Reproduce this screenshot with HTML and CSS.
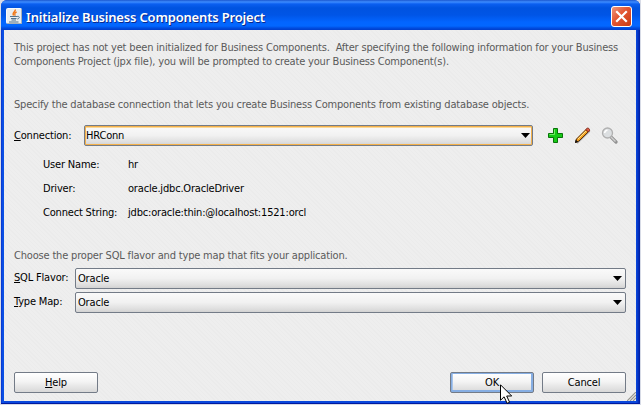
FILE: index.html
```html
<!DOCTYPE html>
<html lang="en">
<head>
<meta charset="utf-8">
<title>Initialize Business Components Project</title>
<link rel="stylesheet" href="styles.css">
</head>
<body>
<div class="window">
  <header class="titlebar">
    <svg class="java" width="16" height="16" viewBox="0 0 16 16">
      <rect x=".5" y=".5" width="15" height="15" rx="1" fill="#e9edef" stroke="#f8fafb"/>
      <path d="M15.500 1v14.500H1" fill="none" stroke="#a9b1b7"/>
      <path d="M9.200 1.500c1 2-3.800 3-1.600 6M10.600 4C8 5.200 8.600 6 9.200 7.800" fill="none" stroke="#f07818" stroke-width="1.400"/>
      <path d="M4 8.500h7M5 10.500h5.500M5.500 12h4.500M3 14h9.500M11 8.500c3-.8 3 2 .3 2.600" fill="none" stroke="#53738c"/>
    </svg>
    <h1 class="title">Initialize Business Components Project</h1>
    <svg class="close" width="21" height="21" viewBox="0 0 21 21">
      <defs><linearGradient id="red" x2="1" y2="1"><stop stop-color="#f09a80"/><stop offset=".45" stop-color="#e25532"/><stop offset="1" stop-color="#c93a10"/></linearGradient></defs>
      <rect x=".5" y=".5" width="20" height="20" rx="2.500" fill="url(#red)" stroke="#fff"/>
      <path d="M6 6l9 9M15 6l-9 9" stroke="#fff" stroke-width="2.200" stroke-linecap="square"/>
    </svg>
  </header>
  <main class="content">
    <p class="note intro">This project has not yet been initialized for Business Components.&nbsp; After specifying the following information for your Business<br>Components Project (jpx file), you will be prompted to create your Business Component(s).</p>
    <p class="note specify">Specify the database connection that lets you create Business Components from existing database objects.</p>
    <div class="connection">
      <label class="connection-label"><u>C</u>onnection:</label>
      <div class="combo focused"><span>HRConn</span><svg class="arrow" width="9" height="5"><path d="M0 0h9L4.500 5z"/></svg></div>
      <div class="tools">
        <svg width="17" height="17" viewBox="0 0 17 17">
          <path d="M7 2h4v5h5v4h-5v5H7v-5H2V7h5z" fill="#999" opacity=".6"/>
          <path d="M6.500 1.500h4v5h5v4h-5v5h-4v-5h-5v-4h5z" fill="#16c916" stroke="#087308"/>
          <path d="M7.500 2.500v5h-5" fill="none" stroke="#70ee65"/>
        </svg>
        <svg width="17" height="17" viewBox="0 0 17 17">
          <path d="M3 16L15.500 4" stroke="#aaa" stroke-width="2"/>
          <path d="M1.500 15.500l1-3.500 9.500-9.500 2.300 2.300-9.300 9.200z" fill="#f5a524" stroke="#5a2d06"/>
          <path d="M4 12l8-8" stroke="#ffe28a"/>
          <path d="M11.800 2.500l1.400-1.300h1.300l1 1.300v1.300l-1.200 1.200z" fill="#df5d45" stroke="#842919"/>
          <path d="M1 16l.7-3.500 2.500 2.500z" fill="#111"/>
        </svg>
        <svg width="17" height="17" viewBox="0 0 17 17">
          <path d="M10.500 10.500l4.500 4.500" stroke="#929292" stroke-width="3.200" stroke-linecap="round"/>
          <path d="M10 10l4.500 4.500" stroke="#d0d0d0" stroke-width="1.400"/>
          <circle cx="6.500" cy="6" r="5" fill="#dcdfe1" stroke="#b0b0b0" stroke-width="1.300"/>
          <path d="M3.700 6a2.800 2.800 0 0 1 2.800-2.800" fill="none" stroke="#fff" stroke-width="1.600"/>
        </svg>
      </div>
    </div>
    <dl class="details">
      <dt>User Name:</dt><dd>hr</dd>
      <dt>Driver:</dt><dd>oracle.jdbc.OracleDriver</dd>
      <dt>Connect String:</dt><dd>jdbc:oracle:thin:@localhost:1521:orcl</dd>
    </dl>
    <p class="note choose">Choose the proper SQL flavor and type map that fits your application.</p>
    <div class="choices">
      <label><u>S</u>QL Flavor:</label>
      <div class="combo"><span>Oracle</span><svg class="arrow" width="9" height="5"><path d="M0 0h9L4.500 5z"/></svg></div>
      <label><u>T</u>ype Map:</label>
      <div class="combo"><span>Oracle</span><svg class="arrow" width="9" height="5"><path d="M0 0h9L4.500 5z"/></svg></div>
    </div>
    <footer class="buttons">
      <button class="button help"><span><u>H</u>elp</span></button>
      <button class="button ok">OK</button>
      <button class="button">Cancel</button>
    </footer>
  </main>
  <svg class="grip" width="9" height="9" viewBox="0 0 9 9"><path d="M0 9l9-9M3 9l6-6M6 9l3-3" stroke="#96968f" stroke-width="1.200"/></svg>
  <svg class="cursor" width="13" height="20" viewBox="0 0 13 20"><path d="M.5.800v15.500l3.600-3.500 3 6.500 2.500-1-2.900-6.300h5z" fill="#fff" stroke="#000"/></svg>
</div>
</body>
</html>
```

FILE: styles.css
```css
* { box-sizing: border-box; }
body {
  margin: 0;
  width: 641px;
  height: 405px;
  overflow: hidden;
  background: #d7dbe6;
  color: #000;
  font: 11px/14px "DejaVu Sans Condensed", "DejaVu Sans", sans-serif;
  font-stretch: condensed;
  letter-spacing: -0.18px;
  white-space: nowrap;
}
p, h1, dl, dd { margin: 0; }
.window {
  position: relative;
  width: 639px;
  height: 404px;
  margin-left: 1px;
  padding: 0 4px 3px 3px;
  border-radius: 6px 6px 0 0;
  background: linear-gradient(90deg, #0a30c8 0, #0a58ee 2px, #0a48dc 3px, #0a48dc 635px, #0840d4 636px, #001ba0 639px);
  box-shadow: inset 0 -1px #0019a0;
}
.titlebar {
  display: flex;
  align-items: center;
  height: 30px;
  margin: 0 -4px 0 -3px;
  padding: 2px 8px 0 5px;
  border-radius: 6px 6px 0 0;
  background: linear-gradient(#1b57cf 0, #3d8cff 2px, #0b5ff0 4px, #0053e0 8px, #0055e6 15px, #0265ff 22px, #0267ff 26px, #004de0 28px, #003dcb 30px);
}
.java { margin-bottom: 1px; }
.title {
  flex: 1;
  margin-left: 4px;
  padding-top: 1px;
  color: #fff;
  font: 600 13px/18px "Noto Sans", sans-serif;
  letter-spacing: -0.18px;
  text-shadow: 1px 1px #0a2a8c;
}
.content {
  height: 371px;
  padding: 11px 10px 0;
  background: repeating-linear-gradient(45deg, #eee 0, #eee 2px, #ebebeb 2px, #ebebeb 3px);
}
.note { color: #5a5a5a; }
.specify { margin-top: 29px; }
.connection {
  display: flex;
  align-items: center;
  height: 21px;
  margin-top: 13px;
}
.connection-label {
  width: 70px;
  padding-top: 1px;
}
.combo {
  display: flex;
  align-items: center;
  justify-content: space-between;
  height: 21px;
  padding: 1px 3px 0 2px;
  border: 1px solid #737b87;
  border-radius: 2px;
  background: linear-gradient(#fafafa, #f1f1f1 50%, #dedede 85%, #d2d2d2);
}
.arrow { margin-bottom: 2px; }
.focused {
  width: 449px;
  padding: 1px 2px 0 1px;
  box-shadow: inset 0 0 0 1px #f3b04a, inset 0 2px #fbd99a;
}
.tools { display: flex; gap: 10px; margin-left: 14px; }
.details {
  display: grid;
  grid-template-columns: 85px 1fr;
  grid-auto-rows: 24px;
  align-items: center;
  margin: 7px 0 0 29px;
}
.choose { margin-top: 24px; }
.choices {
  display: grid;
  grid-template-columns: 61px 551px;
  row-gap: 3px;
  margin-top: 5px;
}
.choices label { padding-top: 3px; }
.buttons {
  display: flex;
  width: 612px;
  margin-top: 59px;
}
.button {
  width: 84px;
  height: 21px;
  padding: 0;
  border: 1px solid #737b87;
  border-radius: 2px;
  background: linear-gradient(#fff, #f4f4f4 45%, #e2e2e2 80%, #d8d8d8);
  color: #000;
  font: inherit;
  letter-spacing: inherit;
}
.help { margin-right: auto; }
.ok {
  margin-right: 8px;
  box-shadow: inset 0 0 0 1px #86aee3, inset 0 -2px #86aee3, inset 2px 0 #a9c5ea, inset -2px 0 #86aee3;
}
.grip { position: absolute; right: 4px; bottom: 3px; }
.cursor { position: absolute; left: 499px; top: 384px; }
```
